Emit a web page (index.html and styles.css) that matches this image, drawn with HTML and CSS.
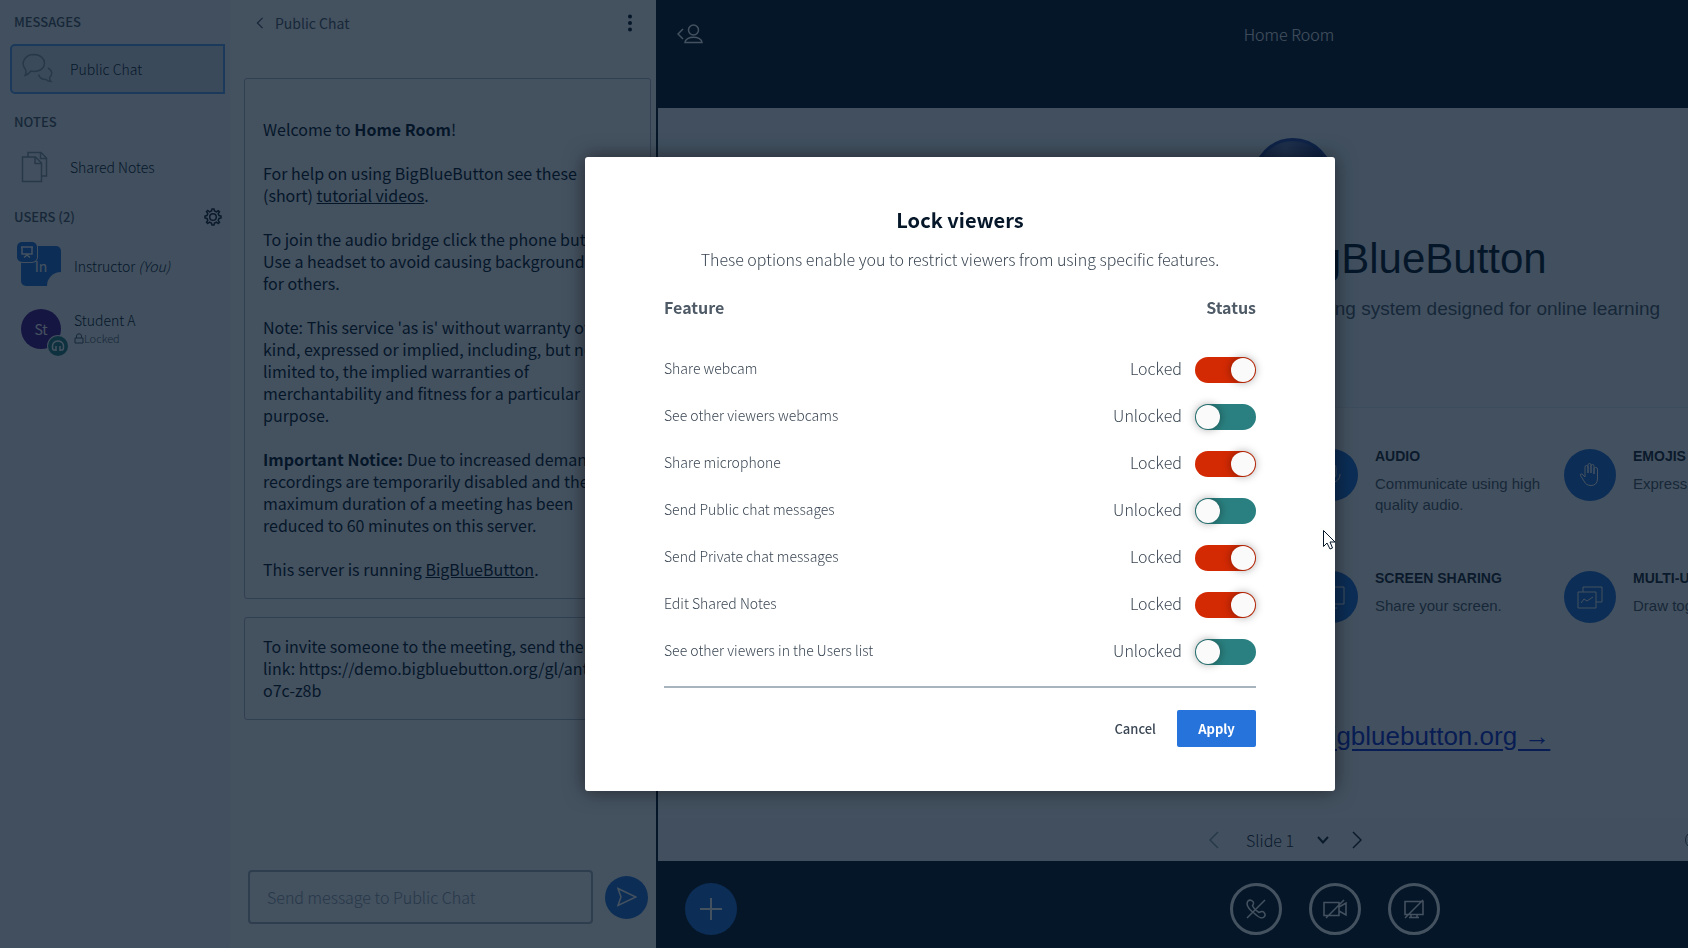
FILE: index.html
```
<!DOCTYPE html>
<html lang="en">
<head>
    <meta charset="UTF-8">
    <title>BigBlueButton - Home Room</title>
    <link rel="stylesheet" href="styles.css">
</head>
<body>
    <div class="app">
        <aside class="sidebar">
            <h2>Messages</h2>
            <button class="side-item active">
                <svg class="side-icon" viewBox="0 0 32 32"><path d="M4.500 16.500 C-1 10 4 1.500 13 1.500 C27 2 27 18.500 13 18.500 L10 18 C8 20.500 6 22 4 22.500 C5 20.500 5.500 18.500 4.500 16.500 Z M27 15 C32 18 31.500 22 28.500 24.500 C28.500 26.500 29 27.500 30 28.500 C28 28.500 26.500 28 25 26.500 C21 26.500 18.500 25 17.500 21.500"/></svg>
                <span>Public Chat</span>
            </button>
            <h2>Notes</h2>
            <button class="side-item">
                <svg class="side-icon" viewBox="0 0 32 32"><path d="M1.500 6 H14.500 L20.500 12 V30.500 H1.500 Z M14 6 V12.500 H20.500 M7 6 V1.500 H20 L25.500 7 V25 H21 M19.500 1.500 V7.500 H25.500"/></svg>
                <span>Shared Notes</span>
            </button>
            <div class="users-head">
                <h2>Users (2)</h2>
                <button class="icon-btn" aria-label="Manage users">
                    <svg width="18" height="18" viewBox="0 0 18 18"><path d="M7.500 3 L8 1 H10 L10.500 3 L12.500 3.800 L14.300 2.600 L15.500 3.800 L14.200 5.500 L15 7.500 L17 8 V10 L15 10.500 L14.200 12.500 L15.500 14.300 L14.200 15.500 L12.500 14.200 L10.500 15 L10 17 H8 L7.500 15 L5.500 14.200 L3.700 15.500 L2.500 14.200 L3.800 12.500 L3 10.500 L1 10 V8 L3 7.500 L3.800 5.500 L2.500 3.700 L3.700 2.500 L5.500 3.800 Z"/><circle cx="9" cy="9" r="3.300"/></svg>
                </button>
            </div>
            <div class="user">
                <div class="avatar moderator">In
                    <span class="badge presenter"><svg width="14" height="14" viewBox="0 0 14 14"><path d="M1 2 H13 M2 2 V9 H12 V2 M7 9 V11 M4 12.500 L7 10 L10 12.500"/></svg></span>
                    <span class="notch"></span>
                </div>
                <div class="user-name">Instructor <em>(You)</em></div>
            </div>
            <div class="user">
                <div class="avatar viewer">St
                    <span class="badge audio"><svg width="14" height="14" viewBox="0 0 14 14"><path d="M2 11 C0 4 4 2 7 2 C10 2 14 4 12 11 M5 7 V12 M9 7 V12 M2 11 H4.500 M9.500 11 H12"/></svg></span>
                </div>
                <div class="user-name">Student A
                    <small><svg width="10" height="11" viewBox="0 0 10 11"><path d="M1 5 H9 V10 H1 Z M2.500 5 V3 A2.500 2.200 0 0 1 7.500 3 V5"/></svg>Locked</small>
                </div>
            </div>
        </aside>

        <section class="chat">
            <header class="chat-head">
                <button class="back">
                    <svg width="8" height="12" viewBox="0 0 8 14"><path d="M7 1 L1 7 L7 13"/></svg>
                    Public Chat
                </button>
                <button class="icon-btn dots" aria-label="Options">
                    <svg width="6" height="18" viewBox="0 0 6 18"><circle cx="3" cy="2.500" r="2"/><circle cx="3" cy="9" r="2"/><circle cx="3" cy="15.500" r="2"/></svg>
                </button>
            </header>
            <div class="message welcome">
                Welcome to <b>Home Room</b>!<br><br>
                For help on using BigBlueButton see these<br>(short) <a href="#">tutorial videos</a>.<br><br>
                To join the audio bridge click the phone button.<br>Use a headset to avoid causing background noise<br>for others.<br><br>
                Note: This service 'as is' without warranty of any<br>kind, expressed or implied, including, but not<br>limited to, the implied warranties of<br>merchantability and fitness for a particular<br>purpose.<br><br>
                <b>Important Notice:</b> Due to increased demand,<br>recordings are temporarily disabled and the<br>maximum duration of a meeting has been<br>reduced to 60 minutes on this server.<br><br>
                This server is running <a href="#">BigBlueButton</a>.
            </div>
            <div class="message">
                To invite someone to the meeting, send them this<br>link: https://demo.bigbluebutton.org/gl/ant-<br>o7c-z8b
            </div>
            <form class="chat-form">
                <input type="text" placeholder="Send message to Public Chat" aria-label="Send message to Public Chat">
                <button type="button" class="round send" aria-label="Send message">
                    <svg width="20" height="20" viewBox="0 0 20 20"><path d="M1 1.500 L19 10 L1 18.500 L4 10 Z"/></svg>
                </button>
            </form>
        </section>

        <main class="room">
            <header class="room-head">
                <button class="icon-btn" aria-label="Users and messages toggle">
                    <svg width="26" height="20" viewBox="0 0 26 20"><path d="M6 5 L1 10 L6 15"/><circle cx="16.500" cy="6" r="5"/><path d="M8 18.500 C8 11.500 25 11.500 25 18.500 Z"/></svg>
                </button>
                <h1>Home Room</h1>
            </header>
            <div class="slide">
                <div class="slide-intro">
                    <div class="slide-logo"></div>
                    <h2>Welcome To BigBlueButton</h2>
                    <p>BigBlueButton is an open source web conferencing system designed for online learning</p>
                </div>
                <div class="features">
                    <div class="feature col-3">
                        <span class="round"><svg width="26" height="26" viewBox="0 0 26 26"><path d="M13 2 C9 2 9 5 9 8 V12 C9 18 17 18 17 12 V8 C17 5 17 2 13 2 Z M5 12 C5 23 21 23 21 12 M13 20 V25"/></svg></span>
                        <div><h3>AUDIO</h3><p>Communicate using high quality audio.</p></div>
                    </div>
                    <div class="feature">
                        <span class="round"><svg width="26" height="26" viewBox="0 0 26 26"><path d="M8 15 V5 Q8 3.500 9.500 3.500 Q11 3.500 11 5 V11 V3 Q11 1.500 12.500 1.500 Q14 1.500 14 3 V11 V4 Q14 2.500 15.500 2.500 Q17 2.500 17 4 V12 V7 Q17 5.500 18.500 5.500 Q20.500 5.500 20.500 7 V17 Q20 23.500 14 23.500 Q9 23.500 7 19 L3.500 13.500 Q3 11.500 5 12 Z"/></svg></span>
                        <div><h3>EMOJIS</h3><p>Express yourself.</p></div>
                    </div>
                    <div class="feature col-3">
                        <span class="round"><svg width="26" height="26" viewBox="0 0 26 26"><path d="M1 3 H25 V20 H1 Z M13 20 V24 M8 24 H18"/></svg></span>
                        <div><h3>SCREEN SHARING</h3><p>Share your screen.</p></div>
                    </div>
                    <div class="feature">
                        <span class="round"><svg width="26" height="26" viewBox="0 0 26 26"><path d="M1 8 H19 V24 H1 Z M6 8 V3 H25 V18 H19 M4 19 L7 15 L10 17 L16 13"/></svg></span>
                        <div><h3>MULTI-USER WHITEBOARD</h3><p>Draw together.</p></div>
                    </div>
                </div>
                <p class="more">For more information visit <a href="#">bigbluebutton.org →</a></p>
            </div>
            <div class="slide-bar">
                <div class="pager">
                    <button class="icon-btn muted" aria-label="Previous slide"><svg width="10" height="18" viewBox="0 0 10 18"><path d="M9 1 L1 9 L9 17"/></svg></button>
                    <label class="pager-select">
                        <select aria-label="Skip slide"><option>Slide 1</option></select>
                        <svg width="12" height="8" viewBox="0 0 12 8"><path d="M1 1 L6 6.500 L11 1"/></svg>
                    </label>
                    <button class="icon-btn" aria-label="Next slide"><svg width="10" height="18" viewBox="0 0 10 18"><path d="M1 1 L9 9 L1 17"/></svg></button>
                </div>
                <button class="icon-btn zoom-out" aria-label="Zoom out"></button>
            </div>
            <footer class="actions">
                <button class="round plus" aria-label="Actions"><svg width="24" height="24" viewBox="0 0 24 24"><path d="M12 1 V23 M1 12 H23"/></svg></button>
                <div class="media">
                    <button class="round outline" aria-label="Join audio"><svg width="20" height="20" viewBox="0 0 20 20"><path d="M1 19 L19 1 M2 2 C4 0 8 2 7.500 4.500 L6.500 7 C8 10 10 12 13 13.500 L15.500 12.500 C18 12 20.500 16 18 18 C16 20 12 18 8.500 14.500 C4 11 -1 6 2 2 Z"/></svg></button>
                    <button class="round outline" aria-label="Share webcam"><svg width="24" height="20" viewBox="0 0 24 20"><path d="M1 3.500 H16 V16.500 H1 Z M16 8 L23 4 V16 L16 12 M3 19 L21 1"/></svg></button>
                    <button class="round outline" aria-label="Share screen"><svg width="20" height="20" viewBox="0 0 20 20"><path d="M1 2.500 H19 V15.500 H1 Z M7 15.500 V18.500 M13 15.500 V18.500 M5 18.500 H15 M1 19 L19 1"/></svg></button>
                </div>
            </footer>
        </main>

        <div class="overlay">
            <div class="modal" role="dialog" aria-labelledby="lock-title">
                <h2 id="lock-title">Lock viewers</h2>
                <p class="description">These options enable you to restrict viewers from using specific features.</p>
                <table class="locks">
                    <thead>
                        <tr><th>Feature</th><th>Status</th></tr>
                    </thead>
                    <tbody>
                        <tr>
                            <td><label for="lock-cam">Share webcam</label></td>
                            <td><div class="status"><span>Locked</span><input type="checkbox" id="lock-cam" checked></div></td>
                        </tr>
                        <tr>
                            <td><label for="lock-see-cams">See other viewers webcams</label></td>
                            <td><div class="status"><span>Unlocked</span><input type="checkbox" id="lock-see-cams"></div></td>
                        </tr>
                        <tr>
                            <td><label for="lock-mic">Share microphone</label></td>
                            <td><div class="status"><span>Locked</span><input type="checkbox" id="lock-mic" checked></div></td>
                        </tr>
                        <tr>
                            <td><label for="lock-public">Send Public chat messages</label></td>
                            <td><div class="status"><span>Unlocked</span><input type="checkbox" id="lock-public"></div></td>
                        </tr>
                        <tr>
                            <td><label for="lock-private">Send Private chat messages</label></td>
                            <td><div class="status"><span>Locked</span><input type="checkbox" id="lock-private" checked></div></td>
                        </tr>
                        <tr>
                            <td><label for="lock-notes">Edit Shared Notes</label></td>
                            <td><div class="status"><span>Locked</span><input type="checkbox" id="lock-notes" checked></div></td>
                        </tr>
                        <tr>
                            <td><label for="lock-users">See other viewers in the Users list</label></td>
                            <td><div class="status"><span>Unlocked</span><input type="checkbox" id="lock-users"></div></td>
                        </tr>
                    </tbody>
                </table>
                <div class="modal-footer">
                    <button class="cancel">Cancel</button>
                    <button class="apply">Apply</button>
                </div>
                <svg class="pointer" width="13" height="20" viewBox="0 0 13 20"><path d="M0.500 0.500 V16.500 L4 13 L7 19 L9.500 18 L7 12 H12 Z"/></svg>
            </div>
        </div>
    </div>
</body>
</html>
```
FILE: styles.css
```
* {
    box-sizing: border-box;
}
body {
    margin: 0;
    overflow: hidden;
    font-family: "Source Sans Pro", "Noto Sans CJK SC", sans-serif;
    font-size: 16px;
    font-weight: 300;
    line-height: 22px;
    color: #4e5a66;
}
h1, h2, h3, p {
    margin: 0;
    font-weight: inherit;
}
button, input, select {
    font: inherit;
    color: inherit;
    border: none;
    background: none;
    padding: 0;
    margin: 0;
}
svg {
    fill: none;
    stroke: currentColor;
    stroke-width: 1.5;
    display: block;
    flex-shrink: 0;
}

/* the room is wider than the window, the rest is cut off */
.app {
    display: flex;
    width: calc(100vw + 232px);
    height: 100vh;
    background: #06172a;
}
.icon-btn {
    display: flex;
    align-items: center;
}
.round {
    display: flex;
    align-items: center;
    justify-content: center;
    flex-shrink: 0;
    width: 52px;
    height: 52px;
    border-radius: 50%;
    background: #2070d8;
    color: #fff;
}

/* sidebar */
.sidebar {
    width: 230px;
    flex-shrink: 0;
    padding: 11px 5px 0 10px;
    background: #f3f6f9;
    font-size: 14px;
}
.sidebar h2 {
    padding-left: 4px;
    font-size: 13px;
    font-weight: 500;
    text-transform: uppercase;
}
.side-item {
    display: flex;
    align-items: center;
    gap: 17px;
    width: 100%;
    height: 45px;
    margin: 11px 0 17px;
    padding-left: 11px;
    border-radius: 5px 0 0 5px;
    color: #06172a;
}
.side-item.active {
    height: 50px;
    background: #dce4ec;
    border: 2px solid #58a0f0;
    padding-left: 9px;
}
.side-icon {
    width: 32px;
    height: 32px;
    color: #8b9aa8;
}
.users-head {
    display: flex;
    justify-content: space-between;
    padding-right: 3px;
    margin-bottom: 18px;
}
.users-head .icon-btn {
    color: #1a2733;
}
.user {
    display: flex;
    align-items: center;
    gap: 13px;
    margin-bottom: 23px;
    padding-left: 11px;
    height: 40px;
    color: #06172a;
}
.avatar {
    position: relative;
    width: 40px;
    height: 40px;
    line-height: 40px;
    text-align: center;
    font-weight: 400;
    color: #fff;
}
.moderator {
    border-radius: 5px;
    background: #2070d8;
}
.viewer {
    border-radius: 50%;
    background: #4a148c;
}
.badge {
    position: absolute;
    display: flex;
    align-items: center;
    justify-content: center;
    width: 20px;
    height: 20px;
    box-shadow: 0 0 0 1px #f3f6f9;
}
.presenter {
    top: -4px;
    left: -4px;
    border-radius: 5px;
    background: #2070d8;
}
.audio {
    right: -7px;
    bottom: -7px;
    border-radius: 50%;
    background: #2a8080;
}
.notch {
    position: absolute;
    right: 0;
    bottom: 0;
    width: 14px;
    height: 14px;
    border-radius: 14px 0 0 0;
    background: #f3f6f9;
}
.user-name {
    line-height: 18px;
}
.user-name small {
    display: flex;
    align-items: center;
    font-size: 11px;
    color: #4e5a66;
}
.user-name small svg {
    stroke-width: 1;
}

/* chat */
.chat {
    display: flex;
    flex-direction: column;
    width: 426px;
    flex-shrink: 0;
    padding: 0 5px 24px 14px;
    background: #fdfeff;
}
.chat-head {
    display: flex;
    justify-content: space-between;
    height: 78px;
    padding: 12px 18px 0 12px;
    font-size: 14px;
    font-weight: 400;
}
.back, .chat-head .icon-btn {
    display: flex;
    align-items: center;
    gap: 11px;
    height: 22px;
}
.dots svg {
    fill: #06172a;
    stroke: none;
}
.message {
    margin-bottom: 18px;
    padding: 17px 0 18px 18px;
    border: 1px solid #b0bac4;
    border-radius: 3px;
    color: #06172a;
    font-weight: 400;
    white-space: nowrap;
}
.message.welcome {
    padding-top: 39px;
}
.message a {
    color: inherit;
}
.chat-form {
    display: flex;
    align-items: center;
    gap: 12px;
    margin: auto 3px 0 4px;
}
.chat-form input {
    flex: 1;
    height: 54px;
    padding: 0 17px;
    border: 2px solid #a7b3bd;
    border-radius: 4px;
}
.chat-form input::placeholder {
    color: #8b9aa8;
}
.send {
    width: 43px;
    height: 43px;
}

/* room */
.room {
    display: flex;
    flex-direction: column;
    flex: 1;
    min-width: 0;
    margin-left: 2px;
}
.room-head {
    height: 108px;
    padding: 24px 19px;
    color: #fff;
}
.room-head h1 {
    font-size: 16px;
    text-align: center;
    margin-top: -21px;
}
.slide {
    display: flex;
    flex-direction: column;
    flex: 1;
    background: #fbfcfd;
    font-family: "Liberation Sans", Arial, sans-serif;
    font-weight: 400;
    text-align: center;
}
.slide-intro {
    height: 300px;
    padding: 30px 0 0 8px;
    background: #f2f8ff;
    border-bottom: 1px solid #e4eaf4;
}
.slide-logo {
    width: 80px;
    height: 80px;
    margin: 0 auto 16px;
    border-radius: 50%;
    border: 3px solid #2848a0;
    background: radial-gradient(circle at 40% 10%, #7080b8, #102878 60%);
}
.slide-intro h2 {
    font-size: 42px;
    line-height: 50px;
    color: #06172a;
}
.slide-intro p {
    margin-top: 12px;
    font-size: 19px;
    line-height: 26px;
}
.features {
    display: grid;
    grid-template-columns: repeat(4, minmax(0, 1fr));
    grid-auto-rows: 122px;
    padding: 41px 115px 0;
    text-align: left;
}
.col-3 {
    grid-column: 3;
}
.feature {
    display: flex;
    gap: 17px;
    padding-left: 17px;
    white-space: nowrap;
}
.feature p {
    width: 180px;
    font-size: 15px;
    line-height: 21px;
    white-space: normal;
}
.feature h3 {
    font-size: 14px;
    line-height: 14px;
    margin-bottom: 10px;
    font-weight: 700;
    color: #1a2733;
}
.feature svg {
    stroke-width: 1;
}
.more {
    margin-top: 26px;
    padding-right: 12px;
    font-size: 26px;
    line-height: 34px;
}
.more a {
    color: #1030d0;
    text-underline-offset: 4px;
}
.slide-bar {
    display: flex;
    align-items: center;
    height: 43px;
    padding-right: 209px;
    background: #f3f6f9;
}
.pager {
    display: flex;
    align-items: center;
    gap: 23px;
    margin-left: 551px;
    color: #1a2733;
}
.pager .muted {
    color: #8b9aa8;
}
.pager-select {
    display: flex;
    align-items: center;
    padding: 0 0 0 4px;
}
.pager-select svg {
    stroke-width: 2;
}
.pager select {
    width: 71px;
    appearance: none;
}
.zoom-out {
    width: 26px;
    height: 18px;
    margin-left: auto;
    border: 1px solid #4e5a66;
    border-radius: 9px;
}
.actions {
    display: flex;
    align-items: center;
    height: 87px;
    padding: 9px 27px 0;
}
.plus svg {
    stroke-width: 2;
}
.media {
    display: flex;
    gap: 27px;
    margin: 0 auto;
    padding-left: 40px;
}
.outline {
    background: none;
    border: 3px solid #fff;
}

/* lock viewers dialog */
.overlay {
    position: fixed;
    top: 0;
    left: 0;
    display: flex;
    align-items: center;
    justify-content: center;
    width: calc(100vw + 232px);
    height: 100vh;
    background: rgba(6, 23, 42, 0.75);
}
.modal {
    position: relative;
    width: 750px;
    padding: 49px 79px 44px;
    border-radius: 3px;
    background: #fff;
    box-shadow: 0 0 20px rgba(0, 0, 0, 0.5);
    color: #3a4653;
}
.modal h2 {
    font-size: 20px;
    line-height: 28px;
    font-weight: 700;
    text-align: center;
    color: #06172a;
}
.description {
    margin: 14px 0 26px;
    text-align: center;
}
.locks {
    width: 100%;
    border-collapse: collapse;
    border-bottom: 2px solid #a7b3bd;
}
.locks th {
    padding: 0 0 26px;
    font-weight: 700;
    text-align: left;
    color: #4e5a66;
}
.locks th:last-child {
    text-align: right;
}
.locks td {
    height: 47px;
    padding: 0;
    font-size: 14px;
}
.locks tbody tr:last-child td {
    height: 61px;
    padding-bottom: 13px;
}
.status {
    display: flex;
    align-items: center;
    justify-content: flex-end;
    gap: 13px;
    font-size: 16px;
}
.status input {
    appearance: none;
    display: flex;
    width: 61px;
    height: 26px;
    margin-top: 4px;
    padding: 1px;
    border-radius: 13px;
    background: #2a8080;
}
.status input::before {
    content: "";
    width: 24px;
    height: 24px;
    border-radius: 50%;
    background: #fafafa;
    box-shadow: 0 0 10px rgba(0, 0, 0, 0.4);
}
.status input:checked {
    justify-content: flex-end;
    background: #d42a04;
}
.modal-footer {
    display: flex;
    justify-content: flex-end;
    gap: 21px;
    margin-top: 22px;
    font-size: 13px;
}
.cancel {
    font-weight: 500;
}
.apply {
    width: 79px;
    height: 37px;
    border-radius: 2px;
    background: #2773dc;
    color: #fff;
    font-weight: 700;
}
.pointer {
    position: absolute;
    top: 373px;
    left: 738px;
    fill: #fff;
    stroke: #06172a;
    stroke-width: 1;
}
```
